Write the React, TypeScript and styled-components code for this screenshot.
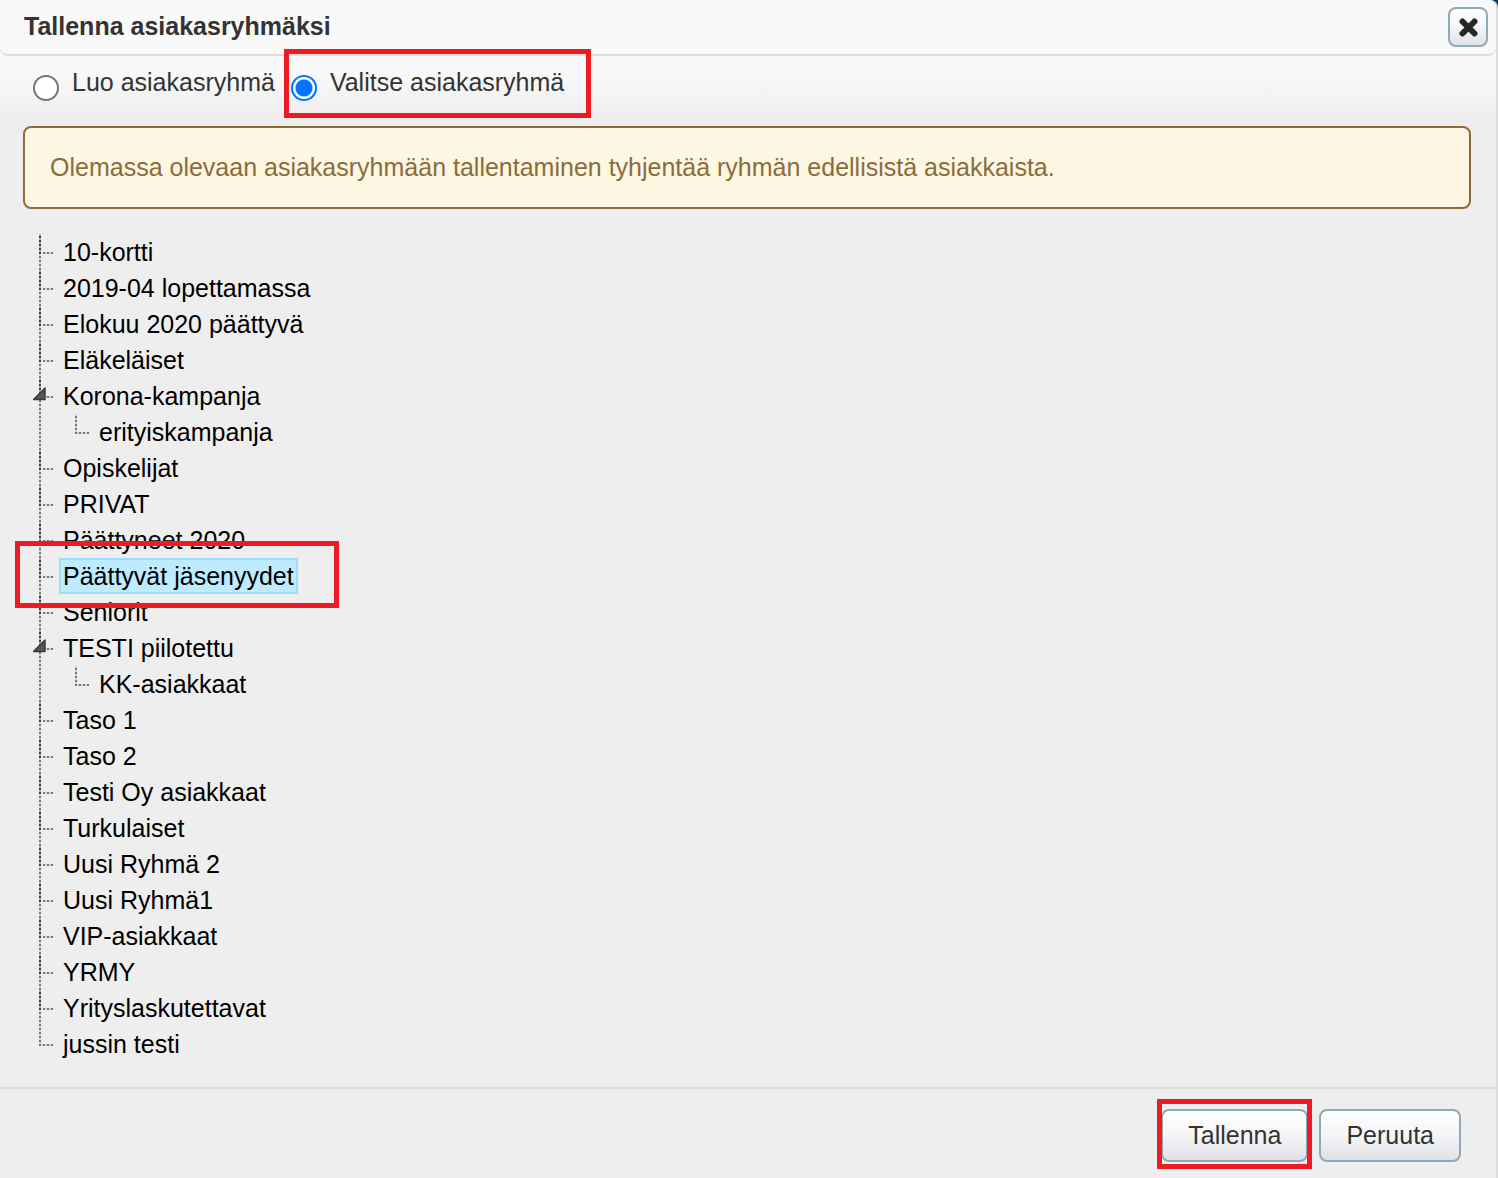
import React, { useState } from 'react';
import styled, { createGlobalStyle, css } from 'styled-components';

const GlobalStyle = createGlobalStyle`
  *, *::before, *::after { box-sizing: border-box; }
  html { background: #0b3a5e; }
  body {
    margin: 0;
    font-family: "Liberation Sans", Arial, sans-serif;
    font-size: 25px;
    line-height: 36px;
    color: #333;
  }
`;

const Dialog = styled.section`
  display: flex;
  flex-direction: column;
  min-height: 100vh;
  border-right: 2px solid #dcdcdc;
  border-top-right-radius: 8px;
  background: linear-gradient(#f9f9f9 70px, #eeeeee 120px);
`;

const Header = styled.header`
  display: flex;
  align-items: center;
  justify-content: space-between;
  height: 56px;
  padding: 0 8px 0 24px;
  background: #f9f9f9;
  border-bottom: 2px solid #dedede;
  border-radius: 8px;
`;

const Title = styled.h1`
  margin: 0;
  padding-bottom: 2px;
  font-size: 25px;
  line-height: 36px;
`;

const buttonFace = css`
  border: 2px solid #92a8b7;
  border-radius: 8px;
  background: linear-gradient(#ffffff, #f5f5f7 50%, #e1e0e6);
  color: #333;
  font-family: inherit;
  cursor: pointer;
`;

const CloseButton = styled.button`
  ${buttonFace}
  display: flex;
  align-items: center;
  justify-content: center;
  width: 40px;
  height: 40px;
  padding: 0;
`;

const Main = styled.main`
  flex: 1;
  padding: 8px 25px 25px 23px;
`;

const Modes = styled.div`
  display: flex;
  gap: 16px;
  height: 62px;
  padding-left: 10px;
`;

const Mode = styled.label`
  position: relative;
  display: flex;
  align-items: flex-start;
  gap: 13px;
  height: 37px;
`;

const Radio = styled.input`
  align-self: flex-end;
  width: 26px;
  height: 26px;
  margin: 0;
  appearance: none;
  border: 2px solid #767676;
  border-radius: 50%;
  background: #fff;

  &:checked {
    border-color: #0075ff;
    background: radial-gradient(circle, #0075ff 8px, #fff 9px);
  }
`;

const Marker = styled.span<{ $inset: string }>`
  position: absolute;
  z-index: 1;
  inset: ${(p) => p.$inset};
  border: 5px solid #ed1c24;
  pointer-events: none;
`;

const Notice = styled.p`
  margin: 0 0 25px;
  padding: 21px 25px 22px;
  border: 2px solid #8a6d3b;
  border-radius: 8px;
  background: #fdf6e2;
  color: #8a6d3b;
`;

const Tree = styled.ul<{ $nested?: boolean }>`
  margin: 0;
  margin-left: ${(p) => (p.$nested ? 36 : 10)}px;
  padding: 0;
  list-style: none;
`;

const down = (dot: string, gap: string) =>
  `repeating-linear-gradient(to bottom, ${gap} 0 2px, ${dot} 2px 4px)`;
const across = 'repeating-linear-gradient(to right, #777 0 2px, #d4d4d4 2px 4px)';

const Branch = styled.li`
  background:
    ${across} 10px 18px / 10px 2px no-repeat,
    ${down('#3c3c3c', '#b0b0b0')} 6px 0 / 2px 20px no-repeat,
    ${down('#777', '#d4d4d4')} 6px 0 / 2px 100% no-repeat;

  &:last-child {
    background:
      ${across} 6px 18px / 14px 2px no-repeat,
      ${down('#777', '#d4d4d4')} 6px 0 / 2px 20px no-repeat;
  }
`;

const Row = styled.div`
  display: flex;
  height: 36px;
`;

const Gutter = styled.span`
  width: 26px;
`;

const Toggle = styled.button`
  display: flex;
  align-items: center;
  width: 26px;
  padding: 0 0 4px;
  border: 0;
  background: none;
  cursor: pointer;
`;

const Group = styled.a<{ $selected: boolean }>`
  position: relative;
  padding: 0 4px;
  line-height: 36px;
  color: #000;
  text-decoration: none;
  white-space: nowrap;
  background: ${(p) => (p.$selected ? '#beebff' : 'none')};
  box-shadow: ${(p) => (p.$selected ? 'inset 0 0 0 2px #99defd' : 'none')};
`;

const Footer = styled.footer`
  display: flex;
  justify-content: flex-end;
  gap: 11px;
  padding: 20px 35px 16px;
  border-top: 2px solid #dcdcdc;
`;

const Action = styled.div`
  position: relative;
`;

const ActionButton = styled.button`
  ${buttonFace}
  height: 53px;
  padding: 0 25px;
  font-size: 25px;
`;

type Node = { name: string; children?: Node[] };

const groups: Node[] = [
  { name: '10-kortti' },
  { name: '2019-04 lopettamassa' },
  { name: 'Elokuu 2020 päättyvä' },
  { name: 'Eläkeläiset' },
  { name: 'Korona-kampanja', children: [{ name: 'erityiskampanja' }] },
  { name: 'Opiskelijat' },
  { name: 'PRIVAT' },
  { name: 'Päättyneet 2020' },
  { name: 'Päättyvät jäsenyydet' },
  { name: 'Seniorit' },
  { name: 'TESTI piilotettu', children: [{ name: 'KK-asiakkaat' }] },
  { name: 'Taso 1' },
  { name: 'Taso 2' },
  { name: 'Testi Oy asiakkaat' },
  { name: 'Turkulaiset' },
  { name: 'Uusi Ryhmä 2' },
  { name: 'Uusi Ryhmä1' },
  { name: 'VIP-asiakkaat' },
  { name: 'YRMY' },
  { name: 'Yrityslaskutettavat' },
  { name: 'jussin testi' },
];

const highlighted = 'Päättyvät jäsenyydet';

type BranchProps = { node: Node; selected: string; onSelect: (name: string) => void };

function GroupBranch({ node, selected, onSelect }: BranchProps) {
  const [open, setOpen] = useState(true);
  return (
    <Branch>
      <Row>
        {node.children ? (
          <Toggle
            type="button"
            aria-label={node.name}
            aria-expanded={open}
            onClick={() => setOpen(!open)}
          >
            <svg width="13" height="14" viewBox="0 0 13 14" aria-hidden="true">
              <path d="M0.5 12.5 12 1V12.5Z" fill="#555" stroke="#3a3a3a" strokeWidth="1.5" strokeLinejoin="round" />
            </svg>
          </Toggle>
        ) : (
          <Gutter />
        )}
        <Group
          href="#"
          $selected={selected === node.name}
          onClick={(e) => {
            e.preventDefault();
            onSelect(node.name);
          }}
        >
          {node.name}
          {node.name === highlighted && <Marker $inset="-17px -41px -14px -44px" />}
        </Group>
      </Row>
      {node.children && open && (
        <Tree $nested>
          {node.children.map((child) => (
            <GroupBranch key={child.name} node={child} selected={selected} onSelect={onSelect} />
          ))}
        </Tree>
      )}
    </Branch>
  );
}

export default function App() {
  const [mode, setMode] = useState('select');
  const [selected, setSelected] = useState(highlighted);
  return (
    <>
      <GlobalStyle />
      <Dialog role="dialog" aria-labelledby="dialog-title">
        <Header>
          <Title id="dialog-title">Tallenna asiakasryhmäksi</Title>
          <CloseButton type="button" aria-label="Sulje">
            <svg width="22" height="22" viewBox="0 0 22 22" aria-hidden="true">
              <path d="M5.5 5.5 17.5 17.5M17.5 5.5 5.5 17.5" stroke="#262626" strokeWidth="6" strokeLinecap="round" />
            </svg>
          </CloseButton>
        </Header>
        <Main>
          <Modes>
            <Mode>
              <Radio type="radio" name="mode" checked={mode === 'create'} onChange={() => setMode('create')} />
              Luo asiakasryhmä
            </Mode>
            <Mode>
              <Radio type="radio" name="mode" checked={mode === 'select'} onChange={() => setMode('select')} />
              Valitse asiakasryhmä
              <Marker $inset="-15px -27px -17px -7px" />
            </Mode>
          </Modes>
          <Notice>Olemassa olevaan asiakasryhmään tallentaminen tyhjentää ryhmän edellisistä asiakkaista.</Notice>
          <Tree>
            {groups.map((node) => (
              <GroupBranch key={node.name} node={node} selected={selected} onSelect={setSelected} />
            ))}
          </Tree>
        </Main>
        <Footer>
          <Action>
            <ActionButton type="button">Tallenna</ActionButton>
            <Marker $inset="-10px -4px -7px -4px" />
          </Action>
          <Action>
            <ActionButton type="button">Peruuta</ActionButton>
          </Action>
        </Footer>
      </Dialog>
    </>
  );
}
